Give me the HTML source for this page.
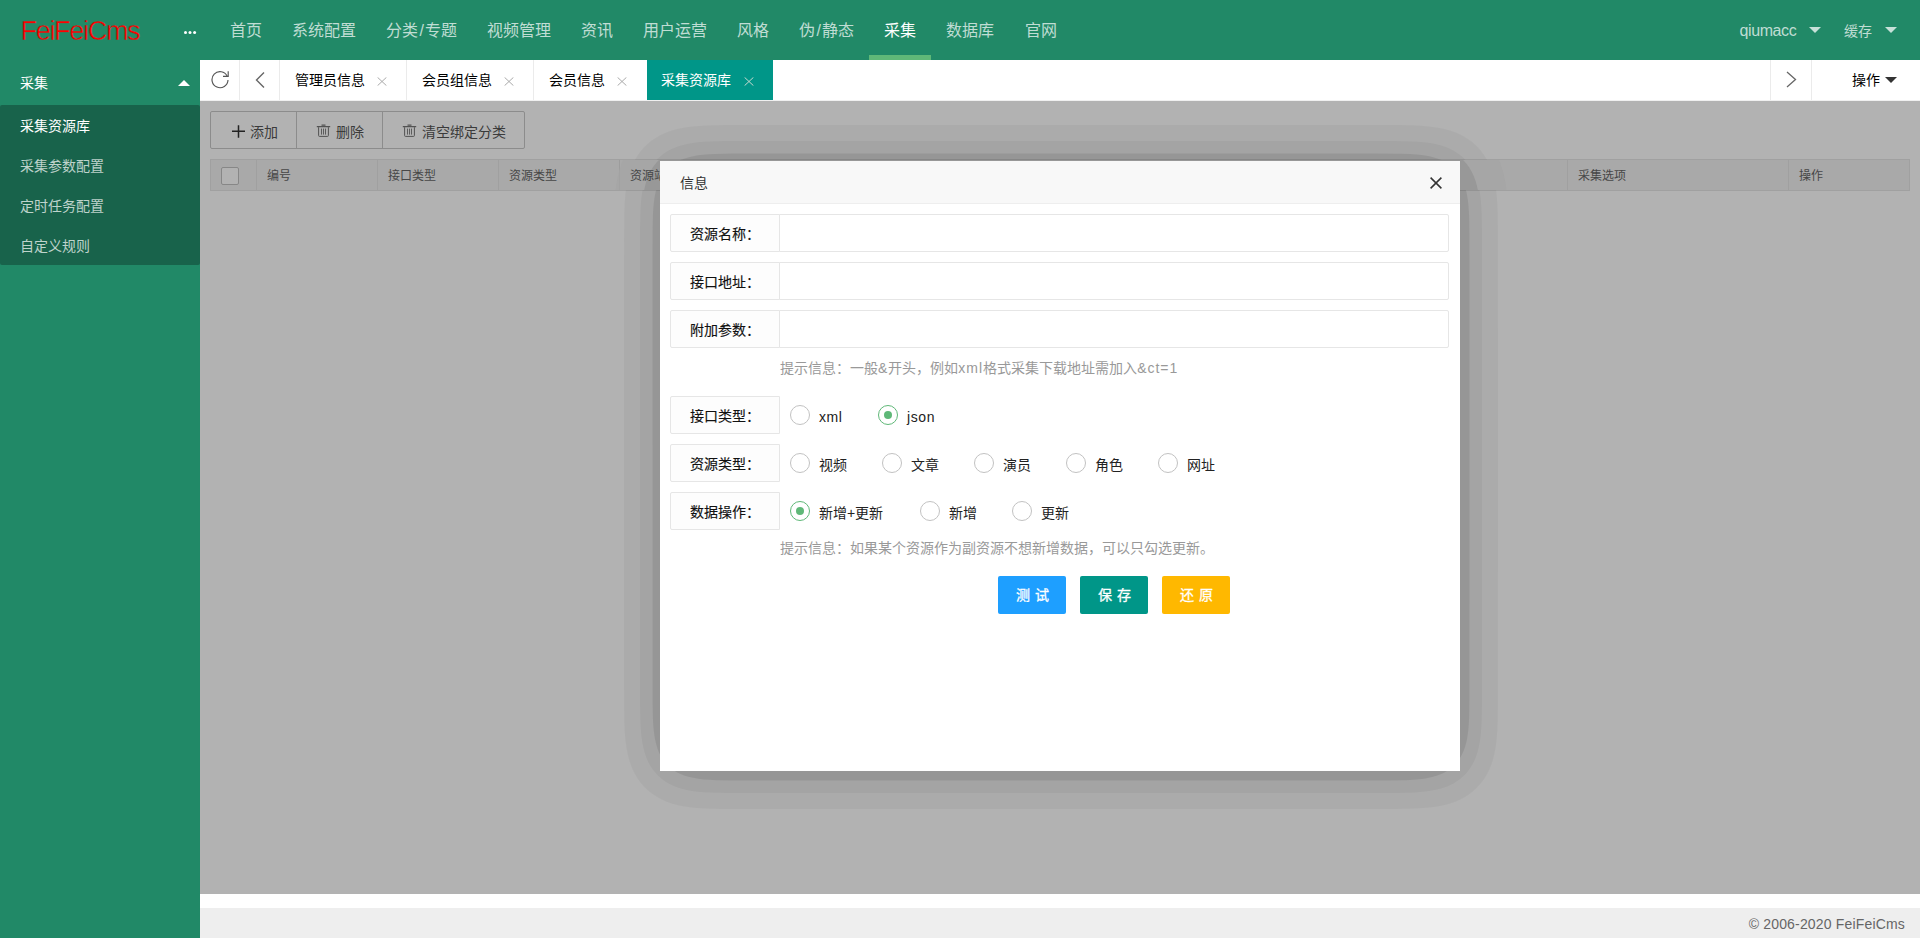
<!DOCTYPE html>
<html lang="zh-CN"><head><meta charset="utf-8">
<style>
*{box-sizing:border-box;margin:0;padding:0}
html,body{width:1920px;height:938px;overflow:hidden;background:#fff;font-family:"Liberation Sans",sans-serif;color:#333;font-size:14px}
.a{position:absolute;white-space:nowrap}
#hd{position:absolute;left:0;top:0;width:1920px;height:60px;background:#218967}
#sd{position:absolute;left:0;top:60px;width:200px;height:878px;background:#218967}
.nav{font-size:16px;color:rgba(255,255,255,.72);line-height:20px;top:21px}
.tri{position:absolute;width:0;height:0;border-left:6px solid transparent;border-right:6px solid transparent}
.sub{position:absolute;left:0;top:105px;width:200px;height:160px;background:#18634b;border-radius:2px}
.si{left:20px;font-size:14px;line-height:20px;color:rgba(255,255,255,.72)}
#tabs{position:absolute;left:200px;top:60px;width:1720px;height:41px;background:#fff;border-bottom:1px solid #f0f0f0}
.vd{position:absolute;top:60px;width:1px;height:40px;background:#ebebeb}
.tt{font-size:14px;line-height:20px;top:70px;color:#000}
.cx{position:absolute;width:10px;height:9px;top:77px}
#frame{position:absolute;left:200px;top:101px;width:1720px;height:793px;background:#fff;overflow:hidden}
#shade{position:absolute;left:0;top:0;width:1720px;height:793px;background:#000;opacity:.3}
#ft{position:absolute;left:200px;top:908px;width:1720px;height:30px;background:#eee;color:#666;font-size:14px}
.btng{position:absolute;left:10px;top:10px;height:38px;width:315px;border:1px solid #c9c9c9;border-radius:2px;background:#fff}
.bt{font-size:14px;color:#555;line-height:20px;top:21px}
.th{position:absolute;left:10px;top:58px;width:1700px;height:32px;background:#f2f2f2;border:1px solid #e6e6e6}
.thd{position:absolute;top:0;width:1px;height:30px;background:#e6e6e6}
.tht{font-size:12px;color:#666;line-height:16px;top:8px}
#dlg{position:absolute;left:460px;top:60px;width:800px;height:610px;background:#fff;}
#dtitle{position:absolute;left:0;top:0;width:800px;height:43px;background:#f8f8f8;border-bottom:1px solid #eee}
.lbl{position:absolute;left:10px;width:110px;height:38px;border:1px solid #e6e6e6;border-radius:2px 0 0 2px;background:#fdfdfd;font-size:14px;color:#111;-webkit-text-stroke:.15px #111;text-align:center;line-height:20px;padding-top:8.5px}
.inp{position:absolute;left:119px;width:670px;height:38px;border:1px solid #e6e6e6;border-radius:0 2px 2px 0;background:#fff}
.hint{font-size:14px;color:#999;line-height:20px;left:120px}
.rd{position:absolute;width:20px;height:20px;border:1.5px solid #c2c2c2;border-radius:50%}
.rd.on{border-color:#5fb878}
.rd.on:after{content:"";position:absolute;left:4.5px;top:4.5px;width:8px;height:8px;border-radius:50%;background:#5fb878}
.rt{font-size:14px;line-height:20px;color:#222}
.l{letter-spacing:1px}
.btn{position:absolute;top:415px;width:68px;height:38px;border-radius:2px;color:#fff;font-size:14px;line-height:39px;text-align:center;letter-spacing:5px;padding-left:5px;-webkit-text-stroke:.3px #fff}
</style></head><body>
<div id="hd"></div>
<div id="sd"></div>
<!-- logo -->
<div class="a" style="left:20.5px;top:14.3px;font-size:27px;line-height:34px;color:#f00;letter-spacing:-1.3px;-webkit-text-stroke:0.5px #218967">FeiFeiCms</div>
<div class="a" style="left:184px;top:31.2px;width:3.2px;height:3.2px;border-radius:50%;background:#fff;box-shadow:4.5px 0 0 #fff,9.1px 0 0 #fff"></div>
<!-- nav -->
<div class="a nav" style="left:230px">首页</div>
<div class="a nav" style="left:292px">系统配置</div>
<div class="a nav" style="left:386px">分类<span style="padding:0 1.5px">/</span>专题</div>
<div class="a nav" style="left:487px">视频管理</div>
<div class="a nav" style="left:581px">资讯</div>
<div class="a nav" style="left:643px">用户运营</div>
<div class="a nav" style="left:737px">风格</div>
<div class="a nav" style="left:799px">伪<span style="padding:0 1.5px">/</span>静态</div>
<div class="a nav" style="left:884px;color:#fff">采集</div>
<div class="a nav" style="left:946px">数据库</div>
<div class="a nav" style="left:1025px">官网</div>
<div class="a" style="left:869px;top:55px;width:62px;height:5px;background:#5fb878"></div>
<div class="a nav" style="left:1739.5px;font-size:16px;letter-spacing:-0.4px">qiumacc</div>
<div class="tri" style="left:1809px;top:27px;border-top:6px solid rgba(255,255,255,.75)"></div>
<div class="a nav" style="left:1844px;font-size:14px">缓存</div>
<div class="tri" style="left:1885px;top:27px;border-top:6px solid rgba(255,255,255,.75)"></div>
<!-- side -->
<div class="a si" style="top:73px;color:#fff">采集</div>
<div class="tri" style="left:178px;top:80px;border-bottom:6px solid #fff"></div>
<div class="sub"></div>
<div class="a si" style="top:116px;color:#fff">采集资源库</div>
<div class="a si" style="top:156px">采集参数配置</div>
<div class="a si" style="top:196px">定时任务配置</div>
<div class="a si" style="top:236px">自定义规则</div>
<!-- tabs -->
<div id="tabs"></div>
<svg class="a" style="left:210px;top:69px" width="20" height="20" viewBox="0 0 20 20"><path d="M17.2 7.2 A8 8 0 1 0 18 11" fill="none" stroke="#555" stroke-width="1.15"/><path d="M18.2 2.2 V7.4 H13" fill="none" stroke="#555" stroke-width="1.15"/></svg>
<div class="vd" style="left:239px"></div>
<svg class="a" style="left:254px;top:71px" width="12" height="18" viewBox="0 0 12 18"><path d="M10 1.5 L2.5 9 L10 16.5" fill="none" stroke="#666" stroke-width="1.4"/></svg>
<div class="vd" style="left:279px"></div>
<div class="a tt" style="left:295px">管理员信息</div>
<svg class="cx" style="left:377px" viewBox="0 0 10 9"><path d="M0.6 0.4L9.4 8.6M9.4 0.4L0.6 8.6" stroke="#aaa" stroke-width="1"/></svg>
<div class="vd" style="left:406px"></div>
<div class="a tt" style="left:422px">会员组信息</div>
<svg class="cx" style="left:504px" viewBox="0 0 10 9"><path d="M0.6 0.4L9.4 8.6M9.4 0.4L0.6 8.6" stroke="#aaa" stroke-width="1"/></svg>
<div class="vd" style="left:533px"></div>
<div class="a tt" style="left:549px">会员信息</div>
<svg class="cx" style="left:617px" viewBox="0 0 10 9"><path d="M0.6 0.4L9.4 8.6M9.4 0.4L0.6 8.6" stroke="#aaa" stroke-width="1"/></svg>
<div class="a" style="left:647px;top:60px;width:126px;height:40px;background:#009688"></div>
<div class="a tt" style="left:661px;color:#fff">采集资源库</div>
<svg class="cx" style="left:744px" viewBox="0 0 10 9"><path d="M0.6 0.4L9.4 8.6M9.4 0.4L0.6 8.6" stroke="#c5d9cf" stroke-width="1"/></svg>
<div class="vd" style="left:1770px"></div>
<svg class="a" style="left:1785px;top:71px" width="12" height="18" viewBox="0 0 12 18"><path d="M2 1 L10.5 8.5 L2 16" fill="none" stroke="#666" stroke-width="1.3"/></svg>
<div class="vd" style="left:1811px"></div>
<div class="a tt" style="left:1852px">操作</div>
<div class="tri" style="left:1885px;top:77px;border-top:6px solid #333"></div>
<!-- frame -->
<div id="frame">
  <div class="btng"></div>
  <div class="a" style="left:96px;top:10px;width:1px;height:38px;background:#c9c9c9"></div>
  <div class="a" style="left:182px;top:10px;width:1px;height:38px;background:#c9c9c9"></div>
  <svg class="a" style="left:31.5px;top:23.5px" width="13" height="13" viewBox="0 0 13 13"><path d="M6.5 0.2V12.8M0 6.3H13" stroke="#333" stroke-width="1.5" fill="none"/></svg>
  <div class="a bt" style="left:50px">添加</div>
  <svg class="a" style="left:116px;top:23px" width="15" height="13" viewBox="0 0 15 13"><path d="M5.5 1.1H9.5M0.8 2.6H14.2" stroke="#777" stroke-width="1.1" fill="none"/><path d="M2.6 3.2V11.6Q2.6 12.4 3.4 12.4H11.6Q12.4 12.4 12.4 11.6V3.2" stroke="#777" stroke-width="1" fill="none"/><path d="M5.5 4.6V10.6M7.5 4.6V10.6M9.5 4.6V10.6" stroke="#777" stroke-width="0.9" fill="none"/></svg>
  <div class="a bt" style="left:136px">删除</div>
  <svg class="a" style="left:202px;top:23px" width="15" height="13" viewBox="0 0 15 13"><path d="M5.5 1.1H9.5M0.8 2.6H14.2" stroke="#777" stroke-width="1.1" fill="none"/><path d="M2.6 3.2V11.6Q2.6 12.4 3.4 12.4H11.6Q12.4 12.4 12.4 11.6V3.2" stroke="#777" stroke-width="1" fill="none"/><path d="M5.5 4.6V10.6M7.5 4.6V10.6M9.5 4.6V10.6" stroke="#777" stroke-width="0.9" fill="none"/></svg>
  <div class="a bt" style="left:222px">清空绑定分类</div>
  <div class="th">
    <div class="a" style="left:10px;top:7px;width:18px;height:18px;border:1px solid #c2c2c2;border-radius:2px;background:#fff"></div>
    <div class="thd" style="left:45px"></div>
    <div class="a tht" style="left:56px">编号</div>
    <div class="thd" style="left:166px"></div>
    <div class="a tht" style="left:177px">接口类型</div>
    <div class="thd" style="left:287px"></div>
    <div class="a tht" style="left:298px">资源类型</div>
    <div class="thd" style="left:408px"></div>
    <div class="a tht" style="left:419px">资源站</div>
    <div class="thd" style="left:1356px"></div>
    <div class="a tht" style="left:1367px">采集选项</div>
    <div class="thd" style="left:1577px"></div>
    <div class="a tht" style="left:1588px">操作</div>
  </div>
  <div id="shade"></div>
  <!--SHD--><svg id="shd" style="position:absolute;left:0;top:0" width="1720" height="793" viewBox="0 0 1720 793"><defs><clipPath id="hc"><rect x="11" y="59" width="1698" height="30"/></clipPath></defs><path d="M1298.00 366.00 L1297.94 606.21 L1297.76 618.77 L1297.41 628.43 L1296.82 636.85 L1296.00 643.98 L1295.05 649.82 L1293.93 654.95 L1292.55 659.94 L1291.08 664.24 L1289.14 668.91 L1287.15 672.90 L1284.61 677.17 L1282.08 680.78 L1278.92 684.60 L1275.83 687.78 L1272.48 690.73 L1268.87 693.47 L1264.99 695.96 L1260.86 698.21 L1256.47 700.20 L1251.83 701.93 L1246.96 703.41 L1241.22 704.77 L1235.92 705.72 L1229.77 706.53 L1223.47 707.10 L1215.66 707.54 L1207.12 707.80 L1196.55 707.94 L545.19 708.00 L519.84 707.88 L504.20 707.44 L496.42 706.93 L489.48 706.20 L482.74 705.15 L476.92 703.90 L470.76 702.13 L465.53 700.20 L460.61 697.94 L456.01 695.36 L451.75 692.47 L447.40 688.91 L443.83 685.41 L440.26 681.21 L437.39 677.17 L434.59 672.41 L432.18 667.38 L430.16 662.11 L428.65 657.18 L427.42 652.11 L426.35 646.33 L425.55 640.43 L424.98 634.45 L424.53 627.22 L424.26 619.38 L424.09 609.18 L424.00 576.69 L424.01 140.45 L424.19 115.63 L424.41 107.80 L424.77 100.56 L425.36 93.36 L426.17 86.84 L427.30 80.46 L428.65 74.82 L430.35 69.35 L432.41 64.11 L434.85 59.10 L437.39 54.83 L440.60 50.35 L443.83 46.59 L447.40 43.09 L451.29 39.87 L455.52 36.95 L460.08 34.33 L464.97 32.04 L470.17 30.07 L475.04 28.59 L480.78 27.23 L486.08 26.28 L492.23 25.47 L498.53 24.90 L505.63 24.49 L514.17 24.22 L524.05 24.08 L1184.17 24.01 L1200.75 24.10 L1212.10 24.33 L1221.35 24.76 L1229.07 25.40 L1236.59 26.39 L1243.81 27.80 L1250.03 29.48 L1255.90 31.57 L1259.79 33.27 L1263.98 35.46 L1267.92 37.89 L1271.60 40.56 L1275.02 43.46 L1278.17 46.59 L1281.06 49.92 L1283.69 53.45 L1286.06 57.18 L1288.17 61.08 L1290.04 65.14 L1291.84 69.89 L1293.20 74.26 L1294.46 79.32 L1295.46 84.50 L1296.24 89.79 L1296.97 96.95 L1297.49 105.38 L1297.80 115.03 L1297.95 126.98Z" fill="rgba(0,0,0,0.0335)"/><path d="M1282.00 366.00 L1281.96 600.30 L1281.84 611.92 L1281.60 620.72 L1281.19 628.36 L1280.61 634.77 L1279.93 639.93 L1279.13 644.44 L1278.12 648.84 L1277.04 652.58 L1275.58 656.72 L1274.07 660.21 L1272.36 663.55 L1270.42 666.75 L1268.25 669.78 L1265.86 672.64 L1263.23 675.31 L1260.36 677.79 L1257.26 680.07 L1253.93 682.15 L1250.35 684.00 L1247.11 685.42 L1241.94 687.24 L1235.81 688.84 L1229.31 690.02 L1222.53 690.84 L1214.88 691.41 L1206.42 691.74 L1195.91 691.92 L1179.56 691.99 L528.17 691.94 L509.94 691.54 L503.62 691.19 L497.41 690.63 L492.03 689.92 L486.83 688.98 L481.85 687.77 L477.71 686.48 L473.25 684.73 L469.07 682.70 L465.20 680.38 L461.64 677.79 L458.38 674.94 L455.43 671.84 L452.79 668.50 L450.45 664.94 L448.40 661.18 L446.42 656.72 L444.96 652.58 L443.61 647.75 L442.55 642.76 L441.67 637.07 L441.04 631.28 L440.56 624.25 L440.13 610.16 L440.01 586.65 L440.07 127.07 L440.48 109.51 L440.85 103.06 L441.39 97.23 L442.07 92.07 L442.99 87.01 L444.17 82.08 L445.48 77.85 L447.26 73.27 L449.39 68.92 L451.88 64.81 L454.41 61.39 L457.62 57.81 L460.79 54.90 L464.28 52.24 L468.07 49.85 L472.17 47.75 L476.57 45.93 L481.25 44.40 L486.19 43.16 L491.37 42.18 L497.41 41.37 L503.62 40.81 L510.64 40.43 L524.69 40.10 L549.69 40.00 L1193.14 40.06 L1211.36 40.43 L1217.68 40.77 L1223.91 41.30 L1229.97 42.08 L1235.17 43.02 L1240.15 44.23 L1244.29 45.52 L1248.21 47.03 L1251.91 48.77 L1255.38 50.72 L1258.62 52.88 L1261.62 55.25 L1264.38 57.81 L1266.91 60.57 L1269.52 63.93 L1271.55 67.06 L1273.60 70.82 L1275.17 74.27 L1276.70 78.37 L1277.98 82.62 L1279.01 87.01 L1279.84 91.50 L1280.55 96.66 L1281.15 103.06 L1281.57 110.69 L1281.83 119.50 L1281.96 131.70Z" fill="rgba(0,0,0,0.0405)"/><path d="M1269.50 366.00 L1269.46 596.72 L1269.15 616.12 L1268.82 623.01 L1268.29 629.29 L1267.73 633.78 L1266.99 638.20 L1266.16 641.97 L1265.14 645.63 L1263.91 649.17 L1262.45 652.57 L1260.76 655.81 L1259.11 658.44 L1256.95 661.35 L1254.89 663.68 L1252.24 666.21 L1249.75 668.20 L1246.59 670.30 L1243.67 671.92 L1240.55 673.35 L1237.24 674.61 L1233.16 675.85 L1228.85 676.86 L1224.35 677.65 L1219.02 678.32 L1213.54 678.78 L1206.58 679.14 L1189.24 679.45 L553.36 679.50 L529.33 679.42 L516.12 679.16 L509.15 678.83 L503.66 678.39 L498.30 677.75 L493.15 676.86 L488.24 675.69 L484.19 674.41 L480.39 672.89 L476.85 671.13 L473.57 669.13 L470.57 666.89 L467.84 664.43 L465.05 661.35 L462.89 658.44 L460.73 654.90 L458.89 651.13 L457.36 647.16 L456.11 643.02 L455.12 638.74 L454.35 634.34 L453.71 629.29 L453.26 624.16 L452.91 617.84 L452.57 601.81 L452.51 148.62 L452.61 126.21 L452.96 113.01 L453.35 106.70 L453.90 101.02 L454.61 96.00 L455.46 91.64 L456.55 87.41 L457.90 83.33 L459.55 79.43 L461.24 76.19 L463.48 72.71 L465.71 69.86 L468.21 67.21 L470.98 64.78 L474.02 62.57 L477.34 60.60 L480.92 58.87 L484.76 57.39 L488.84 56.15 L493.15 55.14 L497.65 54.35 L502.98 53.68 L508.46 53.22 L514.72 52.89 L532.08 52.55 L1175.15 52.51 L1201.69 52.72 L1210.07 53.02 L1216.98 53.49 L1223.70 54.25 L1229.48 55.27 L1234.94 56.65 L1239.47 58.21 L1242.65 59.59 L1245.64 61.14 L1248.43 62.87 L1251.02 64.78 L1253.41 66.85 L1255.60 69.08 L1257.60 71.46 L1259.68 74.42 L1261.27 77.10 L1262.89 80.39 L1264.28 83.83 L1265.45 87.41 L1266.41 91.10 L1267.20 94.90 L1267.89 99.33 L1268.41 103.85 L1268.89 110.13 L1269.19 117.03 L1269.47 136.40Z" fill="rgba(0,0,0,0.0843)"/><g clip-path="url(#hc)"><path d="M1308.00 366.00 L1307.93 608.66 L1307.73 621.43 L1307.33 631.85 L1306.70 640.41 L1305.75 648.25 L1304.74 654.17 L1303.44 659.95 L1301.81 665.57 L1300.06 670.47 L1298.02 675.20 L1295.68 679.73 L1293.04 684.06 L1290.10 688.18 L1286.86 692.07 L1283.31 695.71 L1279.46 699.09 L1275.77 701.88 L1271.35 704.75 L1266.62 707.32 L1261.60 709.60 L1256.90 711.37 L1251.36 713.06 L1245.56 714.46 L1239.55 715.56 L1233.34 716.39 L1226.30 717.04 L1218.44 717.50 L1209.84 717.77 L1198.49 717.93 L542.73 717.99 L516.44 717.85 L500.70 717.36 L492.16 716.75 L484.50 715.86 L477.76 714.73 L471.27 713.23 L465.10 711.37 L459.82 709.36 L454.30 706.78 L449.14 703.82 L444.35 700.51 L439.94 696.87 L435.90 692.90 L431.90 688.18 L428.65 683.59 L425.51 678.24 L422.81 672.59 L420.55 666.68 L419.02 661.66 L417.62 655.92 L416.52 650.04 L415.69 644.04 L415.04 637.36 L414.57 630.02 L414.27 621.43 L414.09 611.08 L414.00 578.06 L414.01 138.25 L414.21 113.01 L414.46 104.44 L414.86 97.08 L415.55 89.17 L416.52 81.96 L417.75 75.50 L419.34 69.21 L421.33 63.14 L423.51 57.84 L426.05 52.76 L428.96 47.94 L432.24 43.38 L435.90 39.10 L439.94 35.13 L444.35 31.49 L449.14 28.18 L454.30 25.22 L459.82 22.64 L465.10 20.63 L470.64 18.94 L476.44 17.54 L482.45 16.44 L488.66 15.61 L495.70 14.96 L502.85 14.53 L511.45 14.24 L522.10 14.08 L1186.71 14.02 L1203.43 14.12 L1214.85 14.36 L1224.87 14.86 L1233.34 15.61 L1241.57 16.78 L1248.81 18.28 L1255.69 20.23 L1261.60 22.40 L1266.08 24.41 L1270.32 26.66 L1274.33 29.13 L1278.56 32.19 L1282.06 35.13 L1285.71 38.69 L1288.70 42.06 L1291.77 46.08 L1294.25 49.84 L1296.75 54.26 L1298.96 58.88 L1300.87 63.68 L1302.50 68.65 L1303.86 73.77 L1305.07 79.59 L1306.01 85.55 L1306.86 93.42 L1307.43 101.98 L1307.76 111.79 L1307.94 124.54Z" fill="#a6a6a6"/><path d="M1280.50 366.00 L1280.46 600.04 L1280.33 612.21 L1280.07 621.00 L1279.64 628.61 L1279.04 634.99 L1278.32 640.13 L1277.49 644.60 L1276.44 648.97 L1275.15 653.20 L1273.59 657.27 L1272.01 660.69 L1270.20 663.96 L1268.17 667.07 L1265.91 670.02 L1263.41 672.78 L1260.68 675.35 L1257.70 677.72 L1254.48 679.89 L1251.03 681.84 L1247.34 683.57 L1243.42 685.07 L1239.28 686.35 L1234.31 687.55 L1229.11 688.48 L1223.73 689.18 L1217.51 689.72 L1210.50 690.09 L1192.31 690.44 L549.82 690.50 L525.53 690.41 L511.50 690.09 L504.49 689.72 L498.27 689.18 L492.23 688.38 L487.06 687.42 L482.12 686.18 L477.44 684.66 L473.05 682.85 L468.97 680.75 L465.20 678.36 L461.74 675.70 L458.59 672.78 L455.42 669.19 L452.93 665.76 L450.48 661.64 L448.62 657.77 L446.85 653.20 L445.56 648.97 L444.40 644.05 L443.50 639.00 L442.83 633.84 L442.32 628.03 L441.95 621.59 L441.57 604.65 L441.51 145.57 L441.63 122.12 L442.06 108.07 L442.55 101.06 L443.18 95.28 L443.97 90.18 L445.01 85.20 L446.34 80.37 L447.79 76.24 L449.75 71.79 L451.80 68.04 L454.14 64.50 L456.78 61.18 L459.73 58.10 L463.00 55.27 L466.57 52.71 L470.47 50.43 L474.12 48.67 L478.58 46.93 L482.72 45.65 L487.69 44.45 L492.89 43.52 L498.27 42.82 L504.49 42.28 L510.80 41.94 L528.31 41.57 L1178.76 41.51 L1195.08 41.58 L1206.27 41.77 L1214.72 42.11 L1222.36 42.68 L1229.11 43.52 L1235.58 44.72 L1241.08 46.17 L1246.24 47.98 L1249.47 49.40 L1253.03 51.25 L1256.35 53.32 L1259.43 55.61 L1261.88 57.73 L1264.51 60.38 L1266.91 63.22 L1269.07 66.24 L1271.01 69.42 L1272.71 72.76 L1274.21 76.24 L1275.66 80.37 L1276.72 84.11 L1277.72 88.50 L1278.50 93.00 L1279.17 98.16 L1279.72 104.56 L1280.12 112.17 L1280.35 120.95 L1280.46 132.53Z" fill="#989898"/></g></svg><!--/SHD-->
  <div class="a" style="left:419px;top:59px;width:1px;height:30px;background:rgba(0,0,0,.025)"></div><div class="a tht" style="left:430px;top:67px;color:#454545">资源站</div>
  <div id="dlg">
    <div id="dtitle"></div>
    <div class="a" style="left:20px;top:11.5px;font-size:14px;line-height:20px;color:#333">信息</div>
    <svg class="a" style="left:770px;top:16px" width="12" height="12" viewBox="0 0 12 12"><path d="M0.6 0.6L11.4 11.4M11.4 0.6L0.6 11.4" stroke="#333" stroke-width="1.5"/></svg>
    <div class="lbl" style="top:53px">资源名称：</div><div class="inp" style="top:53px"></div>
    <div class="lbl" style="top:101px">接口地址：</div><div class="inp" style="top:101px"></div>
    <div class="lbl" style="top:149px">附加参数：</div><div class="inp" style="top:149px"></div>
    <div class="a hint" style="top:197px">提示信息：一般<span class="l">&amp;</span>开头，例如<span class="l">xml</span>格式采集下载地址需加入<span class="l">&amp;ct=1</span></div>
    <div class="lbl" style="top:235px">接口类型：</div>
    <div class="rd" style="left:130px;top:244px"></div><div class="a rt l" style="left:159px;top:246px;letter-spacing:.6px">xml</div>
    <div class="rd on" style="left:218px;top:244px"></div><div class="a rt l" style="left:247px;top:246px;letter-spacing:.6px">json</div>
    <div class="lbl" style="top:283px">资源类型：</div>
    <div class="rd" style="left:130px;top:292px"></div><div class="a rt" style="left:159px;top:294px">视频</div>
    <div class="rd" style="left:222px;top:292px"></div><div class="a rt" style="left:251px;top:294px">文章</div>
    <div class="rd" style="left:314px;top:292px"></div><div class="a rt" style="left:343px;top:294px">演员</div>
    <div class="rd" style="left:406px;top:292px"></div><div class="a rt" style="left:435px;top:294px">角色</div>
    <div class="rd" style="left:498px;top:292px"></div><div class="a rt" style="left:527px;top:294px">网址</div>
    <div class="lbl" style="top:331px">数据操作：</div>
    <div class="rd on" style="left:130px;top:340px"></div><div class="a rt" style="left:159px;top:342px">新增+更新</div>
    <div class="rd" style="left:260px;top:340px"></div><div class="a rt" style="left:289px;top:342px">新增</div>
    <div class="rd" style="left:352px;top:340px"></div><div class="a rt" style="left:381px;top:342px">更新</div>
    <div class="a hint" style="top:377px">提示信息：如果某个资源作为副资源不想新增数据，可以只勾选更新。</div>
    <div class="btn" style="left:338px;background:#1e9fff">测试</div>
    <div class="btn" style="left:420px;background:#009688">保存</div>
    <div class="btn" style="left:502px;background:#ffb800">还原</div>
  </div>
</div>
<div id="ft"><div class="a" style="right:15px;top:5.5px;line-height:20px;letter-spacing:0.17px">© 2006-2020 FeiFeiCms</div></div>
</body></html>
